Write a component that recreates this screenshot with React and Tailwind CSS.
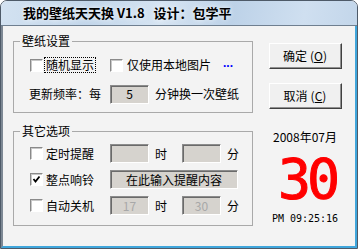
import React from "react";

const cjk = "font-['Noto_Sans_CJK_SC','Noto_Sans',sans-serif]";

function Check({ checked }) {
  return (
    <span className="w-[13px] h-[13px] shrink-0 bg-white border-t border-l border-t-[#8a8a8a] border-l-[#8a8a8a] border-b border-r border-b-[#ffffff] border-r-[#ffffff] shadow-[inset_1px_1px_0_#c8c8c8] flex items-center justify-center">
      {checked && (
        <svg width="9" height="9" viewBox="0 0 9 9">
          <polyline points="1.5,4 3.5,6.5 7.5,1.5" fill="none" stroke="#000" strokeWidth="1.8" />
        </svg>
      )}
    </span>
  );
}

function Field({ w, children, muted }) {
  return (
    <span
      className={`${w} h-[19px] shrink-0 bg-[#d6d3ce] border-t border-l border-t-[#8c8c8c] border-l-[#8c8c8c] border-b border-r border-b-white border-r-white shadow-[inset_1px_1px_0_#6a6a6a] flex items-center justify-center text-[12px] leading-[14px] ${muted ? "text-[#a8a8a8]" : "text-black"}`}
    >
      {children}
    </span>
  );
}

function Btn({ label, k }) {
  return (
    <div className="w-[73px] h-[26px] bg-[#f0f0f0] border-t border-l border-t-white border-l-white border-b border-r border-b-[#404040] border-r-[#404040] shadow-[inset_-1px_-1px_0_#909090] flex items-center justify-center text-[12px] leading-[14px] text-black">
      <span>{label}</span>
      <span className="ml-[3px]">(<span className="underline">{k}</span>)</span>
    </div>
  );
}

export default function App() {
  return (
    <div className={`w-[358px] h-[249px] bg-white ${cjk}`}>
      <div className="h-full flex flex-col rounded-t-[7px] border border-[#4e5a68] overflow-hidden bg-[#f3f3f3]">
        <div className="h-[25px] shrink-0 bg-[linear-gradient(100deg,#d3e2f1_0%,#c2d6ea_25%,#d6e4f2_45%,#bdd2e8_65%,#cfdff0_85%,#c3d6ea_100%)] border-b border-b-[#6f7f90] flex items-center pl-[22px] text-[13px] font-bold text-black [text-shadow:0_0_5px_#ffffff]">
          <span className="whitespace-pre">我的壁纸天天换 V1.8   设计：包学平</span>
        </div>
        <div className="flex-1 flex border-l-2 border-l-[#7d8894] border-r-2 border-r-[#3fa6dc] border-b-2 border-b-[#3fa6dc]">
          <div className="w-[250px] shrink-0 pl-[10px]">
            <fieldset className="w-[240px] mt-[8px] border border-[#a9a9a9]">
              <legend className="ml-[6px] px-[2px] text-[12px] leading-[14px] text-black">壁纸设置</legend>
              <div className="pl-[16px] pt-[10px] pb-[9px] text-[12px] leading-[14px] text-black whitespace-nowrap">
                <div className="flex items-center h-[14px]">
                  <div className="w-[80px] shrink-0 flex items-center">
                    <Check />
                    <span className="ml-[2px] px-[1px] outline outline-1 outline-dotted outline-black">随机显示</span>
                  </div>
                  <Check />
                  <span className="ml-[4px] shrink-0">仅使用本地图片</span>
                  <span className="ml-[12px] text-[#0000ff] font-bold font-['Liberation_Sans',sans-serif] -mt-[4px]">...</span>
                </div>
                <div className="flex items-center mt-[13px] h-[18px] -ml-[1px]">
                  <span className="w-[81px] shrink-0">更新频率：每</span>
                  <Field w="w-[39px]">5</Field>
                  <span className="ml-[6px]">分钟换一次壁纸</span>
                </div>
              </div>
            </fieldset>
            <fieldset className="w-[240px] mt-[11px] border border-[#a9a9a9]">
              <legend className="ml-[6px] px-[2px] text-[12px] leading-[14px] text-black">其它选项</legend>
              <div className="pl-[16px] pt-[6px] pb-[10px] flex flex-col gap-[7px] text-[12px] leading-[14px] text-black whitespace-nowrap">
                <div className="flex items-center h-[19px]">
                  <div className="w-[80px] shrink-0 flex items-center">
                    <Check />
                    <span className="ml-[3px]">定时提醒</span>
                  </div>
                  <Field w="w-[39px]"></Field>
                  <span className="ml-[6px]">时</span>
                  <span className="ml-[15px]"><Field w="w-[39px]"></Field></span>
                  <span className="ml-[6px]">分</span>
                </div>
                <div className="flex items-center h-[19px]">
                  <div className="w-[80px] shrink-0 flex items-center">
                    <Check checked />
                    <span className="ml-[3px]">整点响铃</span>
                  </div>
                  <Field w="w-[128px]">在此输入提醒内容</Field>
                </div>
                <div className="flex items-center h-[19px]">
                  <div className="w-[80px] shrink-0 flex items-center">
                    <Check />
                    <span className="ml-[3px]">自动关机</span>
                  </div>
                  <Field w="w-[39px]" muted>17</Field>
                  <span className="ml-[6px]">时</span>
                  <span className="ml-[15px]"><Field w="w-[39px]" muted>30</Field></span>
                  <span className="ml-[6px]">分</span>
                </div>
              </div>
            </fieldset>
          </div>
          <div className="flex-1 flex flex-col items-center pl-[2px]">
            <div className="mt-[17px]"><Btn label="确定" k="O" /></div>
            <div className="mt-[14px]"><Btn label="取消" k="C" /></div>
            <div className="mt-[21px] text-[12px] leading-[14px] text-black">2008年07月</div>
            <div className="mt-[15px] h-[40px] text-[55px] leading-[40px] text-[#ff0000] [-webkit-text-stroke:1px_#ff0000] font-['DejaVu_Sans_Mono',monospace] tracking-[-4px] -mr-[4px]">30</div>
            <div className="mt-[14px] text-[10px] leading-[12px] text-black font-['DejaVu_Sans_Mono',monospace] whitespace-pre">PM 09:25:16</div>
          </div>
        </div>
      </div>
    </div>
  );
}
